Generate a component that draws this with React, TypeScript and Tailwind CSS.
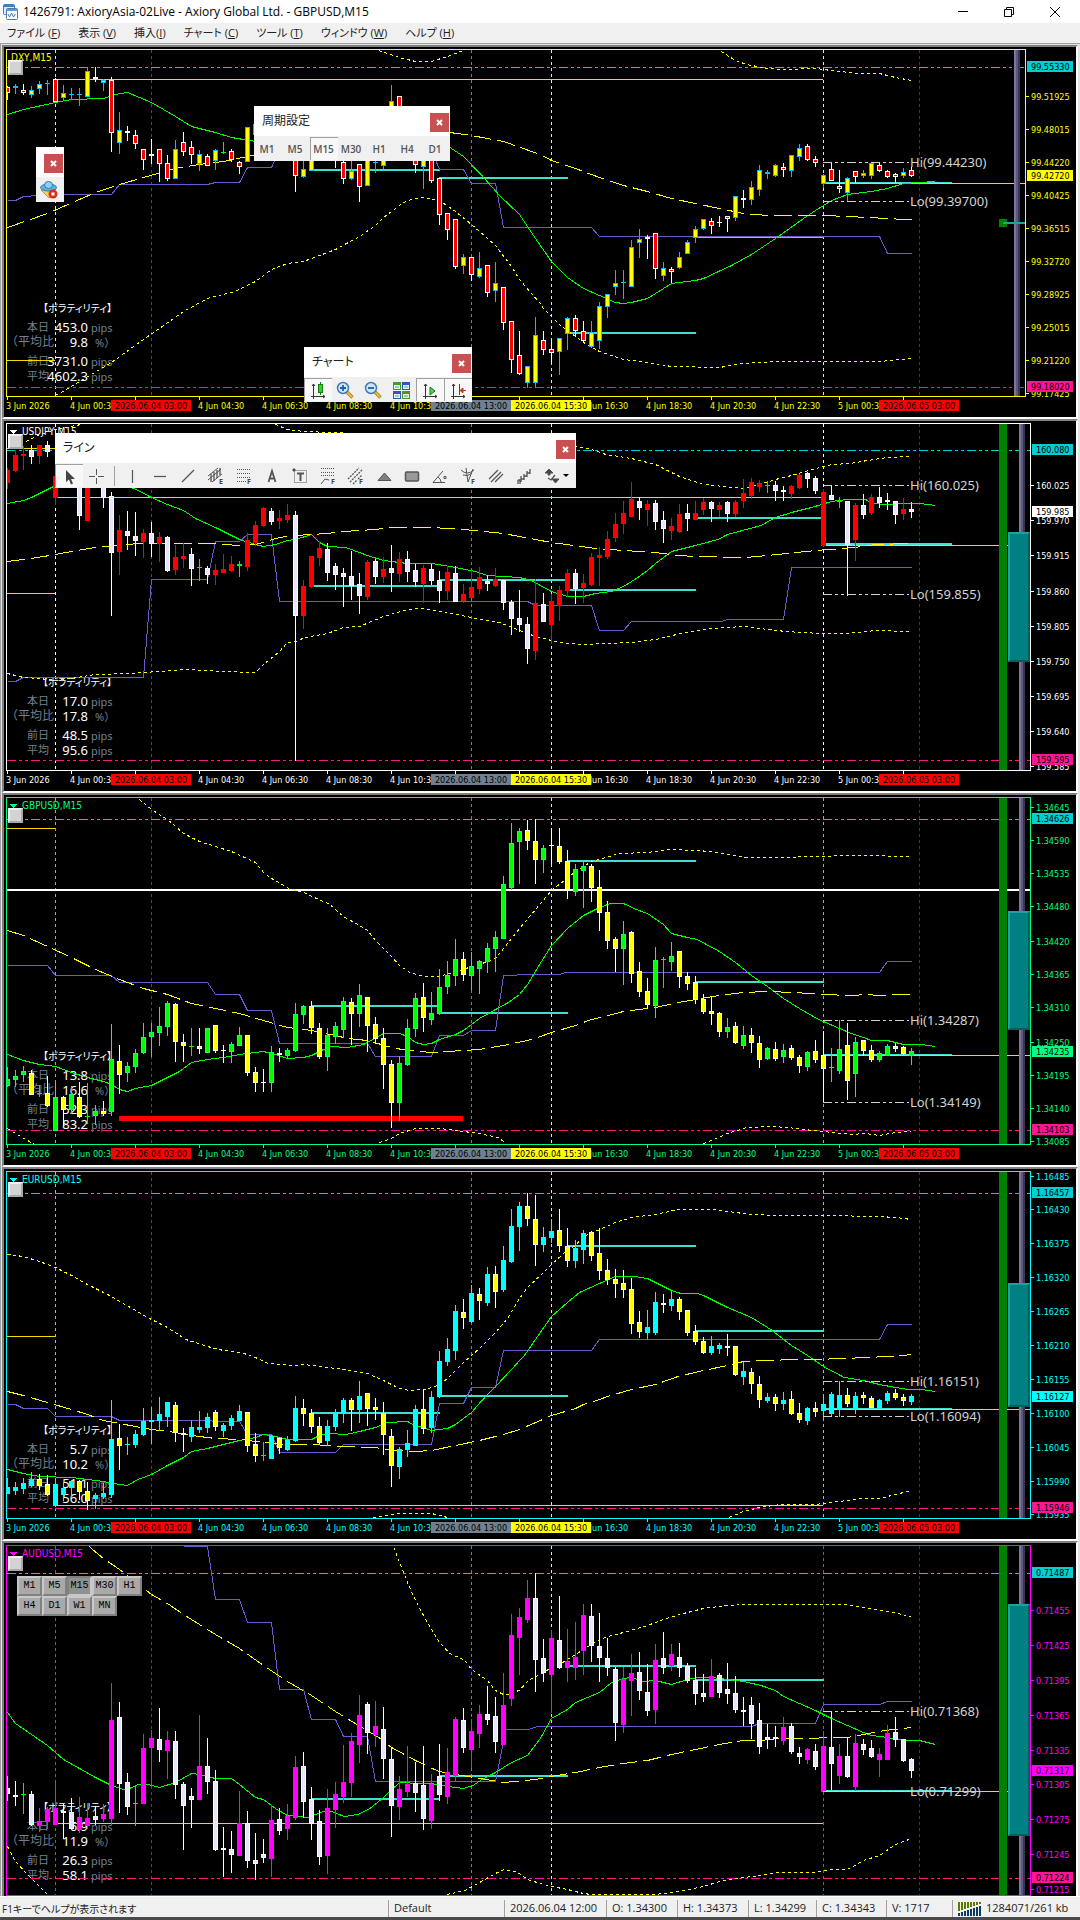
import type { ReactNode } from 'react';

type Point = [number, number];

interface Bar {
  kind: 'u' | 'd' | 'x';
  high: number;
  top: number;
  bottom: number;
  low: number;
}

interface AxisLabel {
  text: string;
  y: number;
  badge?: string;
}

interface Chart {
  symbol: string;
  color: string;
  menuMark: boolean;
  // pixel rows between the data origin and the first row of the plot
  shift: number;
  upEdge: string;
  upFill: string;
  downFill: string;
  bars: string;
  average: string;
  slowAverage: string;
  upperBands: string[];
  lowerBands: string[];
  base: string;
  pivots: number[];
  gold: [number, number | null, number][];
  dayHigh: number;
  dayLow: number;
  hi: [string, number];
  lo: [string, number];
  axis: AxisLabel[];
  zone?: [number, number];
  volatility: string[];
}

// Heights in the series below are kept in thirds of a pixel, x values in bars.
const BAR_STEP = 8;

const parsePoints = (text: string): Point[] =>
  text.trim().split(/\s+/).map((pair) => pair.split(',').map(Number) as Point);

const parseBars = (text: string): Bar[] =>
  text.trim().split(/\s*,\s*/).map((row) => {
    const [high, top, bottom, low] = row.slice(1).split(' ').map(Number);
    return { kind: row[0] as Bar['kind'], high, top, bottom, low };
  });

const charts: Chart[] = [
  {
    symbol: 'DXY,M15',
    color: '#ffff00',
    menuMark: false,
    shift: -50,
    upEdge: '#00bfff',
    upFill: '#ffff00',
    downFill: '#ff0000',
    bars: `d258 262 277 297,u252 260 262 279,d254 270 276 284,u260 271 284 293,u245 252 266 279,u240 250 251 284,d236 238 305 305,u257 279 292 297,u266 282 284 297,u264 282 284 315,
      u204 213 288 288,d202 232 236 245,u239 240 248 270,d231 240 396 453,u336 390 426 459,d378 395 398 422,d390 405 431 444,d447 448 479 507,d417 463 466 489,d447 448 491 543,
      d465 489 536 540,u420 448 536 536,d396 427 453 465,d423 441 464 489,u450 462 489 510,d462 468 495 497,u449 450 480 507,x426 457 458 459,d447 453 479 483,d483 487 500 521,
      u381 381 485 485,u357 372 402 405,u340 350 380 390,u330 340 360 380,d340 350 400 420,d390 400 460 470,d460 470 527 573,u483 507 530 531,u440 450 512 512,u430 440 460 470,
      d430 440 460 470,d430 440 460 501,d483 486 536 549,u484 514 536 538,d492 494 560 603,u440 450 557 557,u460 486 488 518,u440 450 495 506,u255 303 400 400,d289 290 380 400,
      d370 380 420 440,d440 450 494 518,u440 450 500 564,d470 480 542 546,d534 535 644 672,d640 640 687 717,d657 658 800 804,u763 771 795 819,d771 771 824 842,u756 804 830 831,
      d795 796 878 890,u786 850 870 903,d861 862 968 987,d963 964 1079 1116,d993 1066 1121 1122,u1098 1099 1148 1163,u951 1006 1148 1163,d993 1020 1049 1064,d1018 1048 1057 1090,u1014 1015 1053 1122,
      u951 954 1001 1049,d946 955 992 1009,d963 994 1022 1028,u963 997 1040 1042,u906 918 1022 1045,u882 883 920 951,u810 849 860 882,u810 846 848 894,u720 741 860 860,u687 717 728 771,
      d705 711 716 774,d699 700 806 836,u786 804 825 840,d801 808 815 846,u756 771 803 804,u720 726 761 761,u680 687 712 728,u657 657 686 689,d654 663 677 699,d648 666 668 678,
      d648 649 654 693,u588 588 653 660,d570 595 599 621,u543 561 597 612,u495 510 569 585,u510 517 520 534,u492 495 527 529,d489 501 508 528,u465 465 512 528,u432 444 470 482,
      d432 438 479 480,d468 478 487 500,u524 525 551 563,d487 507 541 542,d511 558 564 576,u533 534 578 604,d513 514 530 546,u511 521 525 531,u488 489 527 534,d489 495 512 513,
      d511 514 530 531,d520 524 528 546,u504 516 526 531,d502 511 527 528`,
    average: `0,343 2,328 6,308 8,298 12,295 13.5,283 15,277 18,306 21,350 23,380 26,398 28,411 31,424 40,440 52,430 55.3,443 57,470 59.3,527 61.5,585 64,644 66,715 68,783 70,831 72,864
      74,886 76,907 77,910 78,908 80,894 83,850 86,840 87,834 90.5,795 93,764 96,715 99.5,656 101,630 103,600 105,583 108,574 110,565 112,551 114,547 116,545`,
    slowAverage: `0,682 5,640 7,618 11,576 14,552 17,531 21,505 24,492 27,484 30,470 36,440 46,400 55.3,398 58,406 62,424 66.6,463 68,480 71,505 74,532 77,556 80,574 83,596 86,611 89,625 92,640
      95,646 102,646 105,650 110,654 112,658 113,658`,
    upperBands: [
      '46.4,150 49,173 51,183 53,183 55,170 57,150',
      '89.2,153 91,180 92.4,193 95,205 96.7,209 101,205 104,213 106.6,219 109,220 111,231 113,241',
    ],
    lowerBands: [
      `6,1187 8,1160 13,1087 17,1017 19,985 22,935 25,895 28.4,873 31,845 33,808 35,790 37,784 39,767 41,748 44,709 46,675 47,652 49,615 50,600 52,593 54,602 56,634 58,672 61,737 63,800
      64,838 66.6,910 67,925 69,973 72,1027 74,1055 77,1079 80,1087 83,1100 89,1101 92,1089 96,1084 109,1084 113,1075`,
    ],
    base: '0,602 1,602 2,590 4,587 7,583 13,583 14,553 25,553 26,548 29,548 30,502 33,502 34,450 53,450 54,508 57,508 58,550 61,550 62,682 73,682 74,709 109,709 110,760 113,760',
    pivots: [510, 534, 998, 711, 548],
    gold: [[6, 102, 238], [0, 6, 1081], [102, null, 550]],
    dayHigh: 202,
    dayLow: 1162,
    hi: ['Hi(99.44230)', 487],
    lo: ['Lo(99.39700)', 604],
    axis: [
      { text: '99.51925', y: 289 },
      { text: '99.48015', y: 387 },
      { text: '99.44220', y: 487 },
      { text: '99.40425', y: 586 },
      { text: '99.36515', y: 685 },
      { text: '99.32720', y: 784 },
      { text: '99.28925', y: 883 },
      { text: '99.25015', y: 982 },
      { text: '99.21220', y: 1081 },
      { text: '99.17425', y: 1180 },
      { text: '99.55330', y: 200, badge: '#00ced1' },
      { text: '99.42720', y: 526, badge: '#ffff00' },
      { text: '99.18020', y: 1160, badge: '#ff1493' },
    ],
    volatility: ['453.0', '9.8', '3731.0', '4602.3'],
  },
  {
    symbol: 'USDJPY,M15',
    color: '#ffffff',
    menuMark: true,
    shift: -9,
    upEdge: '#ff0000',
    upFill: '#ff0000',
    downFill: '#e6e6fa',
    bars: `u160 165 202 219,u105 120 165 168,u95 117 122 162,d90 105 123 144,u90 91 120 144,d78 91 110 123,u180 184 248 267,u150 160 200 210,u150 160 200 210,d190 200 302 342,
      u190 200 315 315,u150 160 200 210,d190 200 246 276,d231 243 413 600,u300 345 408 477,d288 348 362 402,d291 363 377 420,u342 354 378 426,d321 354 384 423,u351 366 385 438,
      d363 366 465 470,u390 426 462 477,u384 423 431 456,d399 417 461 510,x432 458 458 495,d453 459 477 504,u447 467 479 507,u417 464 471 473,u423 447 465 470,x438 449 450 483,
      u354 375 453 465,u318 330 381 391,u276 279 330 333,d279 288 318 329,u285 309 317 339,u267 300 312 321,d288 300 600 1037,u495 513 600 641,u423 423 515 518,u381 399 426 450,
      d384 402 471 495,d444 453 477 522,d459 474 483 573,d408 483 510 552,d474 507 540 594,u435 441 543 552,d432 438 483 504,u426 462 484 501,d390 460 473 528,u411 432 474 498,
      d408 432 468 498,d447 465 500 513,u450 459 504 561,d447 462 495 509,d468 495 525 561,u453 471 525 552,d453 474 558 560,u507 537 555 561,u465 516 546 546,u456 486 519 534,
      d480 499 504 525,u459 492 511 514,d495 497 561 582,d555 561 609 657,d525 609 629 648,d606 627 699 744,u492 564 705 732,d534 567 618 618,u537 558 627 684,u513 525 570 615,
      u462 474 527 544,d462 475 519 564,u477 504 516 561,u414 426 507 510,u396 420 426 510,u348 372 423 429,u294 327 366 378,u258 294 324 354,u201 252 303 303,d246 258 278 312,
      u255 267 282 330,d255 264 320 342,d288 315 341 381,u309 333 345 372,u267 297 348 353,d267 294 311 345,u258 294 312 314,u249 261 282 297,d260 262 279 318,u261 270 284 303,
      d258 261 294 318,u255 261 294 303,u192 234 255 276,u189 201 240 249,u195 204 213 228,x198 211 211 231,d198 210 227 255,d213 225 230 255,u210 213 234 249,u177 180 216 219,
      d171 174 191 216,d183 189 227 234,u222 231 392 393,d211 240 254 254,x246 260 260 276,d258 259 389 540,u264 270 372 435,d237 270 297 309,u237 246 291 297,d216 246 261 276,
      d234 255 260 282,d258 259 297 324,u249 282 294 312,d262 282 290 308`,
    average: `0,265 2,257 3,247 5,222 6,212 10,190 15.8,219 18,248 20,269 22,287 23.5,309 26,336 29,373 31,388 32,394 33.5,389 35,376 36,374 38,359 39,382 40,395 42.3,398 45,420 47,436 50,444
      53,446 56,458 58.5,468 60,480 64,486 65.5,496 66.6,512 68,530 70,544 72,544 73.5,536 75.5,530 77,513 78.6,490 80,466 81,445 83,409 84,402 86,391 88.8,373 90,358 94.2,331 96,306
      98,291 100.5,278 103,259 105,253 107.3,253 108,264 110,268 112,264 114,264 116,270`,
    slowAverage: `0,439 3,430 6,418 8,408 11,398 14,390 16.3,386 21,386 25,384 29,390 31,389 34,366 36,360 40,354 42,349 46,342 48,337 53,336 57,344 62,354 64,363 66,373 68,383 73.5,400 77,405
      81,412 83.8,420 86,424 92.3,427 95,421 98.6,413 101,405 104.5,400 107,394 108.5,388 113,386`,
    upperBands: [
      '2.3,78 3.8,62 6,42 9.2,27',
      '33.5,27 35,42 37,50 40.6,52 50,60 66,80 71,95 73,103 74.8,118 78,130 81,148 84,185 87,208 89.6,213 92,221 94,207 96,193 98,182 100.2,165 103,148 105.3,145 107.5,136 110,127 113,125',
    ],
    lowerBands: [
      `0,775 2,787 4,791 6,795 8,791 11,779 15,774 19,768 22,764 25,765 27,769 31,773 32,749 34,708 35,683 36,680 37.2,668 40,656 42,637 44,633 47,605 50,583 52,580 55,593 58,608 61.5,622
      64,645 66,665 69,683 72,688 74.8,686 78,682 81,674 84.7,652 88,640 90,636 92,634 96,646 99,652 102,656 105,654 108.6,646 113,649`,
    ],
    base: '0,799 1,799 2,787 17,787 18,493 25,493 26,380 29,380 30,357 33,357 34,559 65,559 66,571 73,571 74,647 77,647 78,619 89.2,619 90,613 97,613 98,457 113,457',
    pivots: [513, 495, 524, 309, 388],
    gold: [[0, 6, 99], [6, 102, 247], [0, 6, 535], [102, null, 391]],
    dayHigh: 105,
    dayLow: 1036,
    hi: ['Hi(160.025)', 211],
    lo: ['Lo(159.855)', 538],
    axis: [
      { text: '160.025', y: 211 },
      { text: '159.970', y: 316 },
      { text: '159.915', y: 421 },
      { text: '159.860', y: 528 },
      { text: '159.805', y: 634 },
      { text: '159.750', y: 739 },
      { text: '159.695', y: 844 },
      { text: '159.640', y: 949 },
      { text: '159.585', y: 1055 },
      { text: '160.080', y: 104, badge: '#00ced1' },
      { text: '159.985', y: 290, badge: '#ffffff' },
      { text: '159.595', y: 1034, badge: '#ff1493' },
    ],
    zone: [351, 741],
    volatility: ['17.0', '17.8', '48.5', '95.6'],
  },
  {
    symbol: 'GBPUSD,M15',
    color: '#00ff7f',
    menuMark: true,
    shift: -8,
    upEdge: '#00ff7f',
    upFill: '#00ff00',
    downFill: '#ffff00',
    bars: `u832 867 885 888,u840 858 869 888,u829 843 854 873,d840 849 914 914,x885 909 909 920,d858 910 947 948,u870 921 1022 1022,d920 922 957 1005,u890 912 957 969,d876 921 980 981,
      x880 980 980 1000,u945 963 977 1002,d933 963 971 975,u702 807 963 975,d765 813 852 909,u816 828 848 873,u777 789 828 846,u699 741 788 789,u699 726 740 798,u651 708 728 765,
      u633 639 708 735,d639 642 755 813,d732 756 767 813,x714 769 769 795,d714 768 776 789,u714 714 786 786,d705 706 782 786,d765 780 782 816,u756 762 783 816,u711 735 765 766,
      d735 736 848 855,d831 847 878 903,d837 876 878 903,u768 786 878 903,d774 789 794 813,u774 780 795 806,u639 672 782 783,u645 648 674 699,d633 648 713 729,d699 714 800 804,
      u714 735 800 840,u696 708 740 759,u621 633 717 741,d624 636 671 762,u582 615 671 708,d621 622 707 783,d681 703 744 759,d714 744 822 894,d810 822 936 1011,u798 819 938 990,
      u687 714 824 825,u609 624 716 738,d579 621 683 723,u606 669 687 702,u537 591 671 672,u513 555 590 609,u447 507 557 585,d486 507 554 570,u486 528 557 597,u510 513 534 609,
      u459 474 515 546,u423 441 476 543,u258 282 444 444,u99 159 293 297,u114 123 155 279,d90 120 152 177,d87 153 209 279,u165 174 207 246,d114 165 167 219,d114 168 213 219,
      d180 213 299 324,u222 237 303 315,u216 228 240 351,d222 228 293 333,d240 291 368 420,d333 366 450 474,d441 447 476 543,u393 432 476 582,d423 427 549 576,d516 543 603 618,
      d564 603 644 656,u471 510 645 681,x501 508 509 591,u456 498 513 540,d483 484 560 591,d546 558 581 597,d558 577 629 641,d612 627 665 671,d621 663 671 702,d666 669 723 738,
      u684 711 723 741,d696 709 758 759,u708 735 765 774,d714 735 758 786,d738 759 809 831,u771 774 804 807,d756 777 804 810,u762 780 798 816,d765 774 803 807,d795 801 827 846,
      u783 786 830 842,d750 783 809 816,d723 795 834 938,u774 831 833 873,u690 777 840 849,d699 766 872 927,u741 756 849 918,d750 751 780 795,d765 780 809 813,u783 789 809 813,
      u762 768 795 797,d759 768 776 783,d770 772 789 792,u774 783 797 822`,
    average: `0,793 2,811 4,822 6,829 8,846 10,862 12,875 13,882 14,897 15,904 16,896 18,886 20,863 21.5,843 23,817 25,808 27,803 29,792 32,785 33.5,793 35,804 37,802 38,797 39,783 40.3,769
      42.5,771 44.5,762 47,731 49,731 50,740 51,757 52,764 53,760 54,747 56,733 57,721 59,684 61,658 62.6,636 64,612 65,583 66.6,520 68,467 70,415 72,375 74,353 75.4,340 77,340 78.6,358
      80,371 82,402 83,430 85,443 86.2,449 89,484 91,518 93,556 95,588 97,626 99,656 101.4,688 104,714 105.5,731 107,741 108,750 110,752 112,763 114.3,764 116,769`,
    slowAverage: `0,421 2,435 5,468 8,502 11,538 14,569 17,596 20,614 23,640 26,656 29,669 32,690 35,712 38,722 41,735 42.5,744 45,750 48,772 50,780 53,788 57,780 59,777 62,767 65,752 66.6,740
      68,726 71,706 72.6,690 77,664 81,651 83.8,637 86,627 89,616 92,607 95,605 98.4,606 102,613 105.4,615 107.5,612 108.8,615 111,612 113,613`,
    upperBands: [
      `16.5,27 18,57 20,88 22,130 24,153 26,168 28,185 31,217 32,247 33,264 35.2,295 37,306 40.3,344 42,378 44,405 45,420 46,452 48,498 49,527 50.3,547 52,559 54,559 56,545 59,524 61,505
      62.6,456 64,415 65.8,363 68,301 69.6,270 71,244 73,213 74.8,203 76.5,190 80,186 83,178 86,181 88,184 90,193 92.4,201 96.7,202 101,199 105.3,196 109,196 110.5,199 113,199`,
    ],
    lowerBands: [
      '0,1016 1,1031 2.3,1047 3.4,1062',
      '46.5,1056 48,1045 49,1030 51,1016 54,1016 57,1024 59,1030 61.3,1042 62.2,1058',
      '87,1060 88,1051 90,1031 92.4,1013 95.4,1009 97.6,1012 99.5,1019 102,1023 105.5,1033 107.2,1030 109,1035 111,1026 113,1023',
    ],
    base: '0,526 5,526 6,556 13,556 14,577 25,577 26,613 29,613 30,661 33,661 34,760 45,760 46,799 53,799 54,737 57,737 58,721 61,721 62,556 65.4,554 69,552 69.8,547 109,547 110,514 113,514',
    pivots: [648, 669, 213, 576, 794],
    gold: [[0, 6, 115], [102, null, 796]],
    dayHigh: 88,
    dayLow: 1021,
    hi: ['Hi(1.34287)', 691],
    lo: ['Lo(1.34149)', 937],
    axis: [
      { text: '1.34645', y: 52 },
      { text: '1.34590', y: 151 },
      { text: '1.34535', y: 250 },
      { text: '1.34480', y: 349 },
      { text: '1.34420', y: 454 },
      { text: '1.34365', y: 553 },
      { text: '1.34310', y: 652 },
      { text: '1.34250', y: 757 },
      { text: '1.34195', y: 856 },
      { text: '1.34140', y: 955 },
      { text: '1.34085', y: 1055 },
      { text: '1.34626', y: 86, badge: '#00ced1' },
      { text: '1.34235', y: 785, badge: '#00ff7f' },
      { text: '1.34103', y: 1018, badge: '#ff1493' },
    ],
    zone: [363, 722],
    volatility: ['13.8', '16.6', '52.3', '83.2'],
  },
  {
    symbol: 'EURUSD,M15',
    color: '#00ffff',
    menuMark: true,
    shift: -7,
    upEdge: '#00ffff',
    upFill: '#00ffff',
    downFill: '#ffff00',
    bars: `u939 966 984 984,u951 966 975 987,u939 954 969 984,u921 942 960 963,d927 942 962 972,d930 957 987 990,u945 957 1022 1023,u954 969 988 1007,u945 948 968 993,d945 949 980 1003,
      d951 979 1007 1032,u984 990 999 1029,u954 984 994 1000,u705 822 987 996,d777 819 842 912,u816 837 839 867,u795 807 837 846,u729 768 809 810,u726 765 770 834,u696 747 767 795,
      u711 711 753 783,d711 720 803 828,d789 804 807 858,u768 786 813 828,u738 786 792 801,u744 756 786 801,d735 741 785 795,u774 780 795 815,u750 759 780 792,u720 738 765 766,
      d741 742 842 858,d804 837 870 888,x831 870 870 885,u810 813 879 879,d816 819 848 864,u813 825 852 855,u693 729 825 828,d702 729 746 780,d732 745 783 801,d756 783 833 834,
      u765 783 827 840,u732 744 783 795,u699 705 744 771,d699 705 732 795,u648 693 732 771,d684 685 731 780,d699 726 732 762,d711 744 809 867,d792 813 900 963,u846 852 903 939,
      u795 834 852 873,u720 732 840 840,d672 733 789 804,u678 696 786 801,u558 588 695 696,u519 552 588 600,u420 438 555 582,d402 441 458 489,u360 384 468 471,d369 387 405 462,
      u306 327 411 420,d303 327 378 426,u243 285 372 378,u132 183 288 291,u111 123 183 255,d84 123 161 180,d90 162 237 300,u186 216 237 258,u162 198 216 231,d132 195 242 258,
      d189 243 285 303,u225 249 285 306,u195 204 252 294,d200 202 270 285,d189 264 317 342,d282 315 342 357,d312 342 356 396,d315 354 372 396,d339 372 474 504,d438 471 500 516,
      u435 486 501 519,u381 411 501 507,d387 414 419 441,u375 402 420 435,d396 402 440 462,d435 436 501 510,d480 498 530 537,d516 529 563 564,u513 543 561 567,u534 540 549 564,
      d507 543 548 570,d543 544 629 630,u591 618 633 657,d609 621 656 684,d633 657 704 726,u684 696 705 711,d687 697 716 735,u681 705 714 732,d678 703 746 747,d714 744 762 771,
      u726 729 765 777,d711 729 740 753,u690 717 735 756,u681 687 744 755,u648 690 732 753,d669 690 716 723,u681 693 732 746,d681 692 697 714,d693 699 726 726,u702 705 729 730,
      u678 684 705 714,d672 684 696 702,d687 696 705 720,u687 693 708 717`,
    average: `0,912 2,924 4,933 8,937 10,944 12,948 14,958 15,961 16.3,943 18,927 20,900 22,876 23,860 25,851 27,837 29,826 31,817 32,809 33.5,813 35,824 38,823 39,812 40.3,805 42.3,808 44,799
      46,786 47.5,773 50,769 50.7,779 53,795 55,791 56,779 58,743 59.3,707 61,665 63,613 64.7,567 66.6,503 68,453 70,411 71.5,381 74,354 76,334 78.4,334 80,341 81,352 83,376 84.2,384
      86.2,385 87,391 90,427 93,457 95.4,494 98,542 100,572 102,604 104.6,636 107,647 109,657 111,668 112.6,673 114.3,673 116,679`,
    slowAverage: `0,679 2,691 5,711 8,734 10,749 12,765 14,774 18,793 21,802 23,811 26,819 29.2,824 32,832 35,838 38,839 42,843 46,847 48,857 51,860 53,857 56,842 59,826 62,808 64,792 66.6,766
      68,752 71,730 72,718 74,704 75,693 78,673 81,657 83.8,635 87,616 90,602 92,590 95,586 98.4,583 101,584 104.5,580 107.5,577 110,574 112,571 113,568`,
    upperBands: [
      `0,268 2,274 4,290 6,306 8,331 10,358 13,395 16,435 18,463 20,488 22.3,522 25,544 27,555 29.2,563 31,577 32.6,594 35.6,602 37,597 39,604 42,614 45,625 47,645 49,670 50.3,676 52.2,673
      53.8,660 55,640 57,593 59,549 61,503 62.6,457 64,401 65,366 66.6,330 68,297 69.8,258 71,240 72,215 73.5,198 76,171 78,156 81,148 83.8,133 88,133 90,139 93,148 96.7,151 102,151
      109,155 111,157 113,163`,
    ],
    lowerBands: [
      '45.7,1057 47.5,1052 49,1045 53,1045 55,1057',
      '90.2,1058 92,1039 94,1026 96.7,1018 101,1018 104,1009 106.6,1000 109,999 111,988 113,976',
    ],
    base: '0,718 1,718 2,730 5,730 6,754 13,754 14,766 25,766 26,769 29,769 30,808 33,808 34,862 41,862 42,838 53,838 54,715 57,715 58,667 61,667 62,556 73,556 74,523 109,523 110,478 113,478',
    pivots: [744, 692, 243, 498, 731],
    gold: [[0, 6, 514], [6, 102, 1021], [102, null, 734]],
    dayHigh: 85,
    dayLow: 1030,
    hi: ['Hi(1.16151)', 649],
    lo: ['Lo(1.16094)', 753],
    axis: [
      { text: '1.16485', y: 35 },
      { text: '1.16430', y: 133 },
      { text: '1.16375', y: 236 },
      { text: '1.16320', y: 337 },
      { text: '1.16265', y: 439 },
      { text: '1.16210', y: 541 },
      { text: '1.16155', y: 643 },
      { text: '1.16100', y: 745 },
      { text: '1.16045', y: 847 },
      { text: '1.15990', y: 949 },
      { text: '1.15935', y: 1049 },
      { text: '1.16457', y: 83, badge: '#00ced1' },
      { text: '1.16127', y: 694, badge: '#00ffff' },
      { text: '1.15946', y: 1028, badge: '#ff1493' },
    ],
    zone: [354, 726],
    volatility: ['5.7', '10.2', '51.1', '56.0'],
  },
  {
    symbol: 'AUDUSD,M15',
    color: '#ff00ff',
    menuMark: true,
    shift: -8,
    upEdge: '#ff00ff',
    upFill: '#ff00ff',
    downFill: '#e6e6fa',
    bars: `d714 751 765 786,d729 771 774 801,x735 768 769 825,d759 768 860 861,u810 849 861 879,u807 813 850 870,u735 810 858 858,d800 820 824 900,d780 822 870 872,u777 837 873 882,
      u795 840 861 870,d807 834 843 858,u798 828 840 849,u435 546 840 860,d492 537 735 822,d705 732 804 830,x741 796 797 861,u588 630 795 795,u576 600 627 744,d510 603 633 669,
      u579 606 636 720,d579 609 740 780,d732 738 803 933,d750 774 783 867,u531 684 783 783,d600 684 731 765,d696 729 935 936,d867 930 935 1014,d879 933 950 1002,u759 855 951 951,
      d819 855 968 987,d885 966 977 1023,d903 948 957 972,u801 846 960 1014,d810 843 878 890,u798 834 870 903,u654 687 837 843,d642 684 791 837,d747 783 857 903,d816 849 956 978,
      u753 810 951 1005,u732 768 813 867,u621 732 774 792,u585 609 732 774,u471 531 618 672,d492 499 584 645,u489 564 588 624,d507 573 662 720,d627 663 803 894,u714 753 804 843,
      u624 738 759 774,d672 735 762 819,d624 741 842 873,u708 738 846 870,d618 714 770 786,u630 702 774 795,u537 543 711 726,d510 546 629 642,u543 579 633 687,u501 528 585 627,
      d444 528 545 558,d477 534 611 642,u405 501 618 618,u228 291 480 501,u210 237 297 408,u126 180 243 252,d105 180 365 459,d303 360 402 429,u276 300 408 522,d174 306 387 390,
      u273 369 387 429,u252 357 387 423,u198 231 336 408,d198 234 323 369,d225 324 359 429,d300 360 389 411,d387 393 554 606,u387 423 558 582,u348 405 426 531,d342 402 458 483,
      d378 462 518 531,u318 366 513 555,d282 360 387 405,u318 348 381 396,d315 357 389 414,d375 384 426 432,d390 426 465 498,d408 465 476 489,u363 414 474 476,d405 411 464 477,
      d375 453 467 495,d414 465 515 522,d477 517 521 561,d477 501 557 600,d495 546 624 645,d558 598 603 630,d564 598 602 624,u537 567 606 618,d555 564 641 645,d627 645 656 675,
      u630 633 663 675,d618 639 686 693,u579 624 761 762,d519 627 675 753,u618 654 711 735,d597 654 716 717,u588 615 744 756,d603 618 633 648,d606 630 656 657,u630 648 663 714,
      u561 585 663 663,d537 582 605 624,d603 603 668 671,d660 663 698 717`,
    average: `0,523 1,555 3,590 5,621 7,663 9,691 11,718 13,742 14.5,755 15,754 16.3,740 17.6,739 19,748 21,732 23,707 24,708 26,722 28,720 29,740 31,777 32,784 33.5,812 35,832 37.5,838 39.5,821
      40.5,820 42.1,835 43.8,828 45.3,811 47,777 49,734 51.6,736 53,737 55,746 57,751 58.2,742 59.3,723 61,702 63,674 65,652 66.6,602 68,542 70,513 71,493 74,463 75.5,433 77,422 78,419
      79.5,430 81,428 83,438 85,424 86.2,418 88,417 90,425 92,429 94.2,443 96,457 97,475 99,497 101,517 103,541 105,563 107,583 108,592 110,599 112,606 114,607 116,619`,
    slowAverage: `10.2,25 12,62 14,95 16,130 18,168 20,196 22,230 24,260 26,290 29,332 32,382 35,430 38,473 41,521 43.7,560 46.6,602 48,627 51,667 53.1,692 54,701 56,710 59,721 62,734 66,724
      68,716 71,703 74,688 77,676 80,666 83,649 86,635 89,619 92,607 94.2,606 96.3,600 101,601 102,598 105,598 107,590 109.6,578 113,568`,
    upperBands: [
      `48.3,28 49,73 50,133 51,188 52,232 53,273 54,313 55.3,347 57.2,366 58,394 60,427 61,458 62,470 63,468 64.1,455 65.1,427 66.6,408 68,388 69.2,375 71,348 72,334 74,303 75.5,291 77,284
      80,263 82,243 84,230 87,212 90,202 92.4,199 105,199 107,207 110,219 113,236`,
    ],
    lowerBands: [
      '0,925 1,970 2.5,1010 5,1070',
      `54.9,1070 57.2,1057 59,1032 61,1005 62.1,993 63.6,1000 65,1025 66.6,1035 68,1046 70,1055 72,1066 73,1070 81,1068 84,1059 87,1046 89,1031 91,1020 94.2,1011 96,1002 101,1002 103,994
      105,993 107,967 109,951 111,920 113,900`,
    ],
    base: `22,24 25,24 26,184 29,184 30,253 33,253 34,454 37,454 38,544 41,544 42,595 45,595 46,730 61,730 62.3,574 65.1,574 66.2,565 93,565 94,556 101,556 102,499 109,499 110,490 113,490`,
    pivots: [783, 714, 384, 426, 758],
    gold: [[6, 102, 856], [102, null, 760]],
    dayHigh: 106,
    dayLow: 1021,
    hi: ['Hi(0.71368)', 520],
    lo: ['Lo(0.71299)', 761],
    axis: [
      { text: '0.71455', y: 218 },
      { text: '0.71425', y: 323 },
      { text: '0.71395', y: 428 },
      { text: '0.71365', y: 532 },
      { text: '0.71335', y: 638 },
      { text: '0.71305', y: 740 },
      { text: '0.71275', y: 844 },
      { text: '0.71245', y: 949 },
      { text: '0.71215', y: 1055 },
      { text: '0.71487', y: 104, badge: '#00ced1' },
      { text: '0.71317', y: 698, badge: '#ff00ff' },
      { text: '0.71224', y: 1018, badge: '#ff1493' },
    ],
    zone: [198, 896],
    volatility: ['6.9', '11.9', '26.3', '58.1'],
  },
];

// An empty entry keeps its tick but leaves the space to the marked time.
const timeLabels = [
  '3 Jun 2026', '4 Jun 00:30', '', '4 Jun 04:30', '4 Jun 06:30', '4 Jun 08:30', '4 Jun 10:30', '',
  '', '4 Jun 16:30', '4 Jun 18:30', '4 Jun 20:30', '4 Jun 22:30', '5 Jun 00:30', '',
];

const timeBadges = [
  { bar: 18, text: '2026.06.04 03:00', fill: '#ff0000' },
  { bar: 58, text: '2026.06.04 13:00', fill: '#708090' },
  { bar: 68, text: '2026.06.04 15:30', fill: '#ffff00' },
  { bar: 114, text: '2026.06.05 03:00', fill: '#ff0000' },
];

const AXIS_FONT = "font-['DejaVu_Sans_Condensed','DejaVu_Sans',sans-serif] text-[9px]";
const UI_FONT = "font-['Open_Sans','Noto_Sans_CJK_JP',sans-serif]";

function Candle({ bar, index, chart, y }: { bar: Bar; index: number; chart: Chart; y: (v: number) => number }) {
  const x = index * BAR_STEP;
  const edge = bar.kind === 'x' ? '#00ff00' : bar.kind === 'u' ? chart.upEdge : '#ffffff';
  const fill = bar.kind === 'u' ? chart.upFill : chart.downFill;
  const top = y(bar.top);
  const height = Math.max(y(bar.bottom) - top + 1, 1);
  return (
    <g>
      <rect x={x} y={y(bar.high)} width={1} height={y(bar.low) - y(bar.high) + 1} fill={edge} />
      <rect x={x - 2} y={top} width={5} height={height} fill={edge} />
      {height > 2 && bar.kind !== 'x' && <rect x={x - 1} y={top + 1} width={3} height={height - 2} fill={fill} />}
    </g>
  );
}

function Line({ points, color, dash, y }: { points: string; color: string; dash?: string; y: (v: number) => number }) {
  const path = parsePoints(points).map(([bar, v]) => `${bar * BAR_STEP + 0.5},${y(v) + 0.5}`).join(' ');
  return <polyline points={path} fill="none" stroke={color} strokeDasharray={dash} />;
}

function VerticalLine({ bar, color }: { bar: number; color: string }) {
  const x = bar * BAR_STEP + 0.5;
  return <line x1={x} y1="0" x2={x} y2="100%" stroke={color} strokeDasharray="3 3" />;
}

function Volatility({ values, y }: { values: string[]; y: number }) {
  const rows = [
    { label: '本日', x: 20, unit: 'pips', y: 20 },
    { label: '（平均比', x: -1, unit: '%）', y: 35 },
    { label: '前日', x: 20, unit: 'pips', y: 54 },
    { label: '平均', x: 20, unit: 'pips', y: 69 },
  ];
  return (
    <g className="font-['Noto_Sans','Noto_Sans_CJK_JP',sans-serif] text-[13px]">
      <text x="36" y={y} fill="#ffffff" className="text-[10px] [font-feature-settings:'palt']">【ボラティリティ】</text>
      {rows.map((row, i) => (
        <g key={row.label}>
          <text x={row.x} y={y + row.y - 1} fill="#708090" className={i === 1 ? 'text-[12px]' : 'text-[11px]'}>{row.label}</text>
          <text x="81" y={y + row.y} fill="#ffffff" textAnchor="end">{values[i]}</text>
          <text x={i === 1 ? 88 : 84} y={y + row.y} fill="#708090" className="text-[11px]">{row.unit}</text>
        </g>
      ))}
    </g>
  );
}

function Plot({ chart, last }: { chart: Chart; last: boolean }) {
  const y = (v: number) => Math.floor(v / 3) + chart.shift;
  return (
    <svg className="absolute inset-0 h-full w-full" shapeRendering="crispEdges">
      <Volatility values={chart.volatility} y={last ? 265 : 262} />
      <text x={chart.menuMark ? 15 : 4} y="11" fill={chart.color} className="font-['DejaVu_Sans_Condensed','DejaVu_Sans',sans-serif] text-[10px]">{chart.symbol}</text>
      {chart.menuMark && <path d="M3 6h7l-3.500 4z" fill={chart.color} />}
      <VerticalLine bar={6} color={chart.color} />
      <VerticalLine bar={18} color="#ff0000" />
      <VerticalLine bar={58} color="#708090" />
      <VerticalLine bar={68} color="#ffff00" />
      <VerticalLine bar={102} color={chart.color} />
      <VerticalLine bar={114} color="#cc0000" />
      <line x1="0" y1={y(chart.dayHigh) + 0.5} x2="100%" y2={y(chart.dayHigh) + 0.5} stroke="#00ced1" strokeDasharray="9 3 3 3 3 3" />
      <line x1="0" y1={y(chart.dayLow) + 0.5} x2="100%" y2={y(chart.dayLow) + 0.5} stroke="#ff1493" strokeDasharray="9 3 3 3 3 3" />
      {chart.symbol.startsWith('GBP') && (
        <>
          <rect x="0" y={y(300) - 1} width="100%" height="2" fill="#ffffff" />
          <rect x={14 * BAR_STEP} y={y(978)} width={43 * BAR_STEP} height="5" fill="#ff0000" />
        </>
      )}
      {chart.pivots.map((v, i) => (
        <rect key={v} x={(38 + i * 16) * BAR_STEP} y={Math.round(v / 3) + chart.shift - 1} width={16 * BAR_STEP + 1} height="2" fill="#40e0d0" />
      ))}
      {chart.gold.map(([from, to, v]) => (
        <rect key={`${from}-${v}`} x={from * BAR_STEP} y={y(v)} width={to === null ? '100%' : (to - from) * BAR_STEP} height="1" fill="#ffd700" />
      ))}
      <Line points={chart.base} color="#6a5acd" y={y} />
      <Line points={chart.average} color="#00ff00" y={y} />
      <Line points={chart.slowAverage} color="#ffff00" dash="18 6" y={y} />
      {[...chart.upperBands, ...chart.lowerBands].map((band) => (
        <Line key={band} points={band} color="#ffff00" dash="3 3" y={y} />
      ))}
      {parseBars(chart.bars).map((bar, i) => (
        <Candle key={i} bar={bar} index={i} chart={chart} y={y} />
      ))}
      {[chart.hi, chart.lo].map(([text, v]) => (
        <g key={text}>
          <line x1={102 * BAR_STEP} y1={y(v) + 0.5} x2={113 * BAR_STEP - 2} y2={y(v) + 0.5} stroke="#d3d3d3" strokeDasharray="9 3 3 3 3 3" />
          <text x={113 * BAR_STEP - 1} y={y(v) + 5} fill="#d3d3d3" className="font-['Noto_Sans',sans-serif] text-[13px]">{text}</text>
        </g>
      ))}
    </svg>
  );
}

function ChartPanel({ chart, last }: { chart: Chart; last: boolean }) {
  const y = (v: number) => Math.floor(v / 3) + chart.shift;
  const wide = !chart.zone;
  return (
    <section
      className={`overflow-hidden border-t-2 border-r-2 border-l-2 border-t-[#808080] border-r-white border-l-[#808080] bg-black pt-[2px] pl-[2px] ${
        last ? '' : 'border-b-2 border-b-white'
      }`}
    >
      <div className="flex">
        <div className={`relative flex-1 overflow-hidden border ${last ? 'h-[351px]' : 'h-[348px]'}`} style={{ borderColor: chart.color }}>
          <Plot chart={chart} last={last} />
          {chart.zone && <div className="absolute inset-y-0 right-[23px] w-2 bg-[#008000]" />}
          <div className="absolute inset-y-0 right-[5px] w-[6px] border-r-2 border-l-2 border-l-[#7a7599] border-r-[#3b3752] bg-[#5c5780]" />
          {chart.zone ? (
            <div
              className="absolute right-0 w-[22px] border-2 border-t-[#20a0a0] border-r-[#006060] border-b-[#006060] border-l-[#20a0a0] bg-[#008080]"
              style={{ top: y(chart.zone[0]), height: y(chart.zone[1]) - y(chart.zone[0]) }}
            />
          ) : (
            <>
              <div className="absolute top-[169px] right-[18px] size-2 bg-[#008000]" />
              <div className="absolute top-[172px] right-0 h-[2px] w-[22px] bg-[#20a0a0]" />
            </>
          )}
          <button
            aria-label={`${chart.symbol} panel`}
            className="absolute top-[10px] left-px size-[15px] border-2 border-t-[#f0f0f0] border-r-[#a9a9a9] border-b-[#a9a9a9] border-l-[#f0f0f0] bg-[#d3d3d3]"
          />
        </div>
        <svg
          className={`-mt-[2px] shrink-0 overflow-visible ${AXIS_FONT} ${wide ? 'w-[50px]' : 'w-[45px]'} ${last ? 'h-[353px]' : 'h-[350px]'}`}
          shapeRendering="crispEdges"
        >
          {chart.axis.map((label) => {
            const top = y(label.y) + 3;
            return (
              <g key={label.text}>
                {!label.badge && <rect x="0" y={top} width="3" height="1" fill={chart.color} />}
                {label.badge && <rect x="1" y={top - 5} width={wide ? 46 : 41} height="11" fill={label.badge} />}
                <text x="5" y={top + 4} fill={label.badge ? '#000000' : chart.color}>{label.text}</text>
              </g>
            );
          })}
        </svg>
      </div>
      {!last && (
        <svg className={`block h-5 w-full ${AXIS_FONT}`} shapeRendering="crispEdges">
          {timeLabels.map((label, i) => (
            <g key={i} fill={chart.color}>
              <rect x={i * 64 + 1} y="0" width="1" height="3" />
              {label && <text x={i * 64} y="12">{label}</text>}
            </g>
          ))}
          {timeBadges.map((badge) => (
            <g key={badge.text}>
              <rect x={badge.bar * BAR_STEP - 39} y="3" width="80" height="11" fill={badge.fill} />
              <text x={badge.bar * BAR_STEP + 1} y="12" textAnchor="middle" fill="#000000">{badge.text}</text>
            </g>
          ))}
        </svg>
      )}
    </section>
  );
}

function ToolWindow({ title, className, children }: { title: string; className: string; children: ReactNode }) {
  return (
    <div className={`absolute flex flex-col bg-[#f0f0f0] ${className}`}>
      <div className="flex h-[30px] items-center justify-between bg-white pr-px pl-2">
        <span className="text-[12px] [font-feature-settings:'palt']">{title}</span>
        <button aria-label="閉じる" className="mt-[3px] flex size-[19px] items-center justify-center bg-[#c75050] text-white">
          <svg width="7" height="7" viewBox="0 0 7 7" fill="none" stroke="currentColor" strokeWidth="2">
            <path d="M1 1l5 5M6 1L1 6" />
          </svg>
        </button>
      </div>
      <div className="flex flex-1 items-center">{children}</div>
    </div>
  );
}

function ToolButton({ label, active, children }: { label: string; active?: boolean; children: ReactNode }) {
  return (
    <button
      aria-label={label}
      className={`flex h-[23px] w-7 items-center justify-center pt-px pr-[2px] text-[#444444] ${active ? 'border-t border-l border-[#a0a0a0] bg-[#f8f8f8]' : ''}`}
    >
      {children}
    </button>
  );
}

function Glyph({ children }: { children: ReactNode }) {
  return (
    <svg width="18" height="18" viewBox="0 0 18 18" fill="none" stroke="#555555" strokeWidth="1">
      {children}
    </svg>
  );
}

const Tag = ({ children }: { children: string }) => (
  <text x="12" y="17" stroke="none" fill="#444444" className="text-[7px] font-bold">{children}</text>
);

const lineTools: { label: string; icon: ReactNode }[] = [
  { label: '垂直線', icon: <path d="M9.500 3v13" strokeWidth="1.200" /> },
  { label: '水平線', icon: <path d="M3 9.500h12" strokeWidth="1.200" /> },
  { label: 'トレンドライン', icon: <path d="M3 15L15 3" strokeWidth="1.200" /> },
  { label: '等間隔チャネル', icon: <><path d="M1 13L14 2M1 9L11 1M5 15L15 7" /><path d="M4 7v8M7 5v9M10 3v8M13 1v7" strokeWidth="1.300" /><Tag>E</Tag></> },
  { label: 'フィボナッチ', icon: <><path d="M2 2.500h14M2 6.500h14M2 10.500h14M2 14.500h9" strokeDasharray="1 1" /><Tag>F</Tag></> },
  { label: 'テキスト', icon: <path d="M5.500 15L9 4l3.500 11M6.500 11.500h5" strokeWidth="1.800" /> },
  { label: 'テキストラベル', icon: <><rect x="3.500" y="3.500" width="12" height="12" strokeDasharray="1 1" /><path d="M2 2h2v2H2z" fill="#555555" /><path d="M6 6.500h7M9.500 6.500v7.500" strokeWidth="2" /></> },
  { label: 'フィボナッチエクスパンション', icon: <><path d="M2 1.500h14M2 5.500h14M2 8.500h14" strokeDasharray="1 1" /><path d="M2 17l4-5 4 1" /><Tag>F</Tag></> },
  { label: 'フィボナッチチャネル', icon: <><path d="M1 12L12 1M3 15L15 3M6 17l4-4M11 12l4-4" strokeDasharray="2 1" strokeWidth="1.300" /><Tag>F</Tag></> },
  { label: '三角形', icon: <path d="M3 13.500L9.500 6l6.500 7.500z" fill="#808080" /> },
  { label: '長方形', icon: <rect x="2.500" y="5" width="13" height="9" rx="1" fill="#999999" strokeWidth="1.500" /> },
  { label: '角度線', icon: <path d="M2 15.500h12M2 15.500L12 4M7 10q3 2 3 5M13 9.500h2v2h-2z" /> },
  { label: 'フィボナッチアーク', icon: <><path d="M2 3q6 6 13 0M4 8q5 2 9-2M9 15L7 1M9 15l5-13" /><Tag>F</Tag></> },
  { label: 'チャネル', icon: <path d="M2 12L11 3M4 15L14 5M8 15l8-8" strokeWidth="1.200" /> },
  { label: 'サイクル', icon: <path d="M3 13h2v4M3 13v4M6 9v6M6 12h3M9 7v6M9 9h3M12 4v6M12 6h3M15 2v5" strokeWidth="1.300" /> },
  { label: '矢印', icon: <><path d="M2 6l4-4 4 4-3 0v2H5V6zM9 12h7l-3.500 4z" fill="#444444" /><path d="M5 11l3 2 4-5" strokeWidth="1.300" /></> },
];

function AxesGlyph({ children }: { children: ReactNode }) {
  return (
    <Glyph>
      <path d="M4.500 2v15M2 14.500h14M3 4l1.500-2L6 4M14 13l2 1.500-2 1.500" stroke="#333333" />
      {children}
    </Glyph>
  );
}

function Magnifier({ plus }: { plus: boolean }) {
  return (
    <Glyph>
      <path d="M11 11l5.500 5.500" stroke="#b08a20" strokeWidth="3.500" />
      <path d="M11 11l5 5" stroke="#f0c848" strokeWidth="1.500" />
      <circle cx="7" cy="7" r="5.500" fill="#cfe6f8" stroke="#3a7cb8" strokeWidth="1.500" />
      <path d={plus ? 'M4 7h6M7 4v6' : 'M4 7h6'} stroke="#1f5f9f" strokeWidth="1.800" />
    </Glyph>
  );
}

const menus = [
  ['ファイル (', 'F', ')'],
  ['表示 (', 'V', ')'],
  ['挿入(', 'I', ')'],
  ['チャート (', 'C', ')'],
  ['ツール (', 'T', ')'],
  ['ウィンドウ (', 'W', ')'],
  ['ヘルプ (', 'H', ')'],
];

function StatusCell({ className, children }: { className: string; children: ReactNode }) {
  return <div className={`flex items-center border-l border-[#a0a0a0] pl-[5px] ${className}`}>{children}</div>;
}

const periods = ['M1', 'M5', 'M15', 'M30', 'H1', 'H4', 'D1'];
const panelPeriods = [['M1', 'M5', 'M15', 'M30', 'H1'], ['H4', 'D1', 'W1', 'MN']];

export default function App() {
  return (
    <div className={`relative flex min-h-screen flex-col bg-[#f0f0f0] text-[12px] text-[#222222] ${UI_FONT}`}>
      <header className="flex h-[23px] items-center bg-white pr-[2px]">
        <svg className="ml-[3px] shrink-0" width="15" height="16" viewBox="0 0 15 16">
          <rect x="0.500" y="0.500" width="11" height="10" rx="1" fill="#dcebf8" stroke="#3f7fb5" />
          <path d="M0.500 2h11" stroke="#3f7fb5" strokeWidth="2" />
          <rect x="3.500" y="4.500" width="11" height="11" rx="1" fill="#ffffff" stroke="#3f7fb5" />
          <path d="M3.500 6h11" stroke="#5b9bd0" strokeWidth="2" />
          <path d="M5 10l1.500 3 2-4 2 4 2-3" fill="none" stroke="#3f7fb5" />
        </svg>
        <h1 className="ml-[5px] flex-1 truncate text-[12px] leading-[23px] text-black">1426791: AxioryAsia-02Live - Axiory Global Ltd. - GBPUSD,M15</h1>
        <button aria-label="最小化" className="flex h-full w-[46px] items-center justify-center">
          <svg width="10" height="10" stroke="#000000" fill="none"><path d="M0 4.500h10" /></svg>
        </button>
        <button aria-label="元に戻す" className="flex h-full w-[46px] items-center justify-center">
          <svg width="10" height="10" stroke="#000000" fill="none"><path d="M0.500 2.500h7v7h-7zM2.500 2.500v-2h7v7h-2" /></svg>
        </button>
        <button aria-label="閉じる" className="flex h-full w-[46px] items-center justify-center">
          <svg width="10" height="10" stroke="#000000" fill="none"><path d="M0 0l10 10M10 0L0 10" /></svg>
        </button>
      </header>

      <nav className="flex h-5 items-center gap-[18px] pl-[7px]">
        {menus.map(([before, key, after]) => (
          <button key={before} className="text-[11px] leading-5 [font-feature-settings:'palt']">
            {before}<span className="underline">{key}</span>{after}
          </button>
        ))}
      </nav>

      <main className="flex flex-col border-t border-l border-[#a0a0a0] bg-[#e3e3e3] pt-px pr-[2px] pl-px">
        {charts.map((chart, i) => (
          <ChartPanel key={chart.symbol} chart={chart} last={i === charts.length - 1} />
        ))}
      </main>

      <footer className="flex h-[21px] border-t border-white pt-[3px] text-[11px]">
        <div className="flex flex-1 items-center pt-px pl-[2px] text-[10px] [font-feature-settings:'palt']">F1キーでヘルプが表示されます</div>
        <StatusCell className="w-[116px]">Default</StatusCell>
        <StatusCell className="w-[102px]">2026.06.04 12:00</StatusCell>
        <StatusCell className="w-[71px]">O: 1.34300</StatusCell>
        <StatusCell className="w-[71px]">H: 1.34373</StatusCell>
        <StatusCell className="w-[68px]">L: 1.34299</StatusCell>
        <StatusCell className="w-[70px]">C: 1.34343</StatusCell>
        <StatusCell className="w-[66px]">V: 1717</StatusCell>
        <StatusCell className="w-[128px] gap-1">
          <svg width="24" height="14" shapeRendering="crispEdges">
            {[0, 1, 2, 3, 4, 5, 6, 7].map((n) => (
              <g key={n}>
                <rect x={n * 3} y="0" width="2" height={9 - n} fill="#5f7a00" />
                <rect x={n * 3} y={11 - n} width="2" height={3 + n} fill="#0a3a60" />
              </g>
            ))}
          </svg>
          1284071/261 kb
        </StatusCell>
      </footer>
      <div className="h-[3px] bg-[#4a4a4c]" />

      <ToolWindow title="" className="top-[147px] left-[36px] h-[55px] w-[28px]">
        <ToolButton label="エキスパート">
          <svg width="18" height="18" viewBox="0 0 18 18">
            <path d="M1 9l8 8 7-9z" fill="#f0d060" stroke="#c09a30" />
            <ellipse cx="8.500" cy="6.500" rx="8" ry="3.500" fill="#5fb0dc" stroke="#2f7fb0" />
            <ellipse cx="8.500" cy="4" rx="4" ry="3.500" fill="#8fd0f0" stroke="#2f7fb0" />
            <circle cx="13" cy="13" r="4.500" fill="#d83018" />
            <rect x="11.500" y="11.500" width="3" height="3" fill="#ffffff" />
          </svg>
        </ToolButton>
      </ToolWindow>

      <ToolWindow title="周期設定" className="top-[106px] left-[254px] h-[55px] w-[196px]">
        {periods.map((period) => (
          <ToolButton key={period} label={period} active={period === 'M15'}>
            <span className="text-[10px] font-semibold text-[#555555]">{period}</span>
          </ToolButton>
        ))}
      </ToolWindow>

      <ToolWindow title="チャート" className="top-[347px] left-[304px] h-[55px] w-[168px]">
        <ToolButton label="ローソク足" active>
          <AxesGlyph>
            <path d="M11.500 0v13" stroke="#108010" />
            <rect x="9.500" y="2.500" width="4" height="8" fill="#30d030" stroke="#108010" />
          </AxesGlyph>
        </ToolButton>
        <ToolButton label="拡大"><Magnifier plus /></ToolButton>
        <ToolButton label="縮小"><Magnifier plus={false} /></ToolButton>
        <ToolButton label="整列">
          <svg width="17" height="17" viewBox="0 0 17 17">
            <rect width="8" height="8" fill="#4a9a20" />
            <rect x="9" width="8" height="8" fill="#2a5ac0" />
            <rect y="9" width="8" height="8" fill="#2a5ac0" />
            <rect x="9" y="9" width="8" height="8" fill="#4a9a20" />
            <path d="M1 3h6v4H1zM10 3h6v4h-6zM1 12h6v4H1zM10 12h6v4h-6z" fill="#e4f0e0" />
            <path d="M2 5h4M11 5h4M2 14h4M11 14h4" stroke="#6aa0a0" />
          </svg>
        </ToolButton>
        <ToolButton label="自動スクロール" active>
          <AxesGlyph><path d="M9 5l5 4-5 4z" fill="#50d050" stroke="#108010" /></AxesGlyph>
        </ToolButton>
        <ToolButton label="チャートシフト" active>
          <AxesGlyph>
            <path d="M10.500 2v11" stroke="#205080" />
            <path d="M12 8.500h5M14 6l-3 2.500 3 2.500z" fill="#c04010" stroke="#c04010" />
          </AxesGlyph>
        </ToolButton>
      </ToolWindow>

      <ToolWindow title="ライン" className="top-[433px] left-[55px] h-[55px] w-[521px]">
        <ToolButton label="カーソル" active>
          <Glyph><path d="M6 2v12l3-2.500 2 5 2-1-2-4.500h4z" fill="#444444" stroke="none" /></Glyph>
        </ToolButton>
        <ToolButton label="クロスヘア">
          <Glyph><path d="M9.500 2v6M9.500 11v6M2 9.500h6M11 9.500h6" /></Glyph>
        </ToolButton>
        <span className="ml-[3px] h-5 w-px bg-[#a0a0a0]" />
        <span className="w-1" />
        {lineTools.map((tool) => (
          <ToolButton key={tool.label} label={tool.label}><Glyph>{tool.icon}</Glyph></ToolButton>
        ))}
        <svg width="6" height="4" className="-ml-1"><path d="M0 0h6L3 3z" fill="#000000" /></svg>
      </ToolWindow>

      <div className="absolute top-[1576px] left-[17px] flex flex-col font-['Liberation_Mono',monospace] text-[10px] text-black">
        {panelPeriods.map((row) => (
          <div key={row[0]} className="flex">
            {row.map((period) => (
              <button
                key={period}
                className={`flex h-5 w-[25px] items-center justify-center border-2 leading-none ${
                  period === 'M15'
                    ? 'border-t-[#808080] border-r-[#c8c8c8] border-b-[#c8c8c8] border-l-[#808080] bg-[#909090]'
                    : 'border-t-[#c8c8c8] border-r-[#808080] border-b-[#808080] border-l-[#c8c8c8] bg-[#a9a9a9]'
                }`}
              >
                {period}
              </button>
            ))}
          </div>
        ))}
      </div>
    </div>
  );
}
